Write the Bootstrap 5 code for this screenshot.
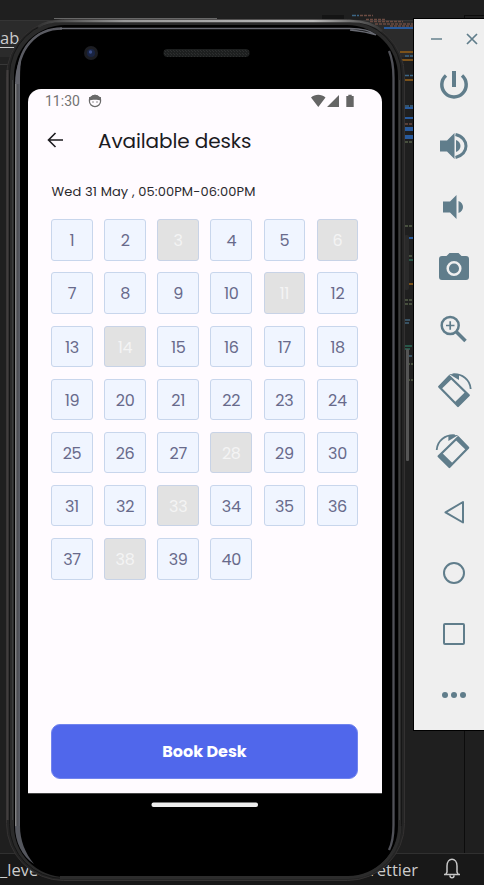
<!DOCTYPE html>
<html lang="en">
<head>
<meta charset="utf-8">
<meta name="viewport" content="width=device-width, initial-scale=1">
<title>Available desks</title>
<link href="https://cdn.jsdelivr.net/npm/bootstrap@5.3.0/dist/css/bootstrap.min.css" rel="stylesheet">
<style>
  body { background: #1f1f1f; }
  .desktop { width: 484px; height: 885px; font-family: Poppins, Inter, sans-serif; }
  .layer { position: absolute; left: 0; top: 0; }
  .editor { height: 885px; font-family: "Open Sans", "Noto Sans", sans-serif; color: #ccc; font-size: 16.5px; line-height: 20px; }
  .tab-strip { margin-top: 20px; height: 37px; background: #2b2b2b; border-top: 1px solid #353535; }
  .tab-strip span { border-bottom: 1px solid #ccc; height: 27px; padding-top: 7px; line-height: 20px; }
  .editor-status { height: 32px; background: #181818; border-top: 1px solid #303030; }
  .status-right { margin-right: 66px; }
  .phone-screen { position: absolute; left: 28px; top: 89px; width: 354px; height: 704px; background: #fffbff; border-radius: 13px 13px 0 0; }
  .status-bar { height: 24px; padding: 0 27px 0 17px; font: 14px/24px Roboto, sans-serif; color: #737373; }
  .face { margin-left: 7px; }
  .app-bar { height: 54px; padding-left: 19px; }
  .app-bar h1 { font-size: 20px; font-weight: 400; color: #1c1b1f; margin: 1px 0 0 34px; letter-spacing: -.1px; line-height: 30px; }
  .slot-time { font-size: 13px; line-height: 20px; margin: 14.6px 23px 17.8px 23.5px; color: #2a292d; white-space: nowrap; letter-spacing: .12px; }
  .desk-grid { display: grid; grid-template-columns: repeat(6, 41.6px); grid-auto-rows: 41.6px; gap: 11.5px; margin: 0 23.2px; }
  .desk { border: 1px solid #c8d6ec; border-radius: 3px; background: #f0f5ff; color: #686a8b; font-size: 16px; padding: 1px 0 0; line-height: 39px; letter-spacing: -.3px; }
  .desk.taken { background: #e2e2e2; color: #f4f4f4; opacity: 1; border-color: #c8d3e6; }
  .book { background: #5067eb; color: #fff; height: 55px; margin: 0 24px 14px 23px; border: 1px solid #7184ee; border-radius: 9px; font-weight: 700; font-size: 16px; padding: 1px 0 0; }
  .tools { position: absolute; left: 413px; top: 18px; width: 71px; height: 713px; background: #efefef; border: 1px solid #000; border-right: 0; color: #607d8b; }
  .window-buttons { height: 35px; padding: 14px 6px 0 16px; }
  .tool { height: 61px; padding-left: 20px; }
</style>
<script src="https://cdn.jsdelivr.net/npm/bootstrap@5.3.0/dist/js/bootstrap.bundle.min.js"></script>
</head>
<body>
<div class="desktop position-relative overflow-hidden">
  <div class="editor d-flex flex-column">
    <div class="tab-strip d-flex"><span>ab</span></div>
    <div class="editor-status mt-auto d-flex align-items-center justify-content-between">
      <div>_leve</div>
      <div class="status-right">Prettier</div>
    </div>
  </div>

  <!-- Editor minimap, status bell and the device frame -->
  <svg class="layer" width="484" height="885" aria-hidden="true">
    <defs>
      <linearGradient id="topEdge" x1="0" x2="1"><stop offset="0" stop-color="#333"/><stop offset=".25" stop-color="#999"/><stop offset=".8" stop-color="#bbb"/><stop offset="1" stop-color="#333"/></linearGradient>
      <linearGradient id="leftGlint" x1="0" x2="1"><stop offset="0" stop-color="#909090"/><stop offset=".45" stop-color="#4c4d52"/><stop offset="1" stop-color="#5c5f68"/></linearGradient>
      <pattern id="mesh" width="3" height="3" patternUnits="userSpaceOnUse"><rect width="3" height="3" fill="#1d1f1f"/><path d="M0 0h1v1H0zM2 2h1v1H2z" fill="#2d2f2f"/></pattern>
    </defs>
    <rect y="57" width="404" height="7" fill="#222"/><rect y="64" width="404" height="1" fill="#383838"/>
    <rect x="322" y="15" width="22" height="5" fill="#141414"/>
    <path d="M464.500 15.500H484M464.500 15V19M464.500 730V853" stroke="#0c0c0c" fill="none"/>
    <g fill="none" stroke-width="1.500">
      <path d="M352 15.500h7M405 56h9M405 75.500h9M405 106h9" stroke="#3c6685" stroke-dasharray="4 1"/>
      <path d="M360 15.500h13M366 19.500h20M370 21.500h33M375 24h38M390 26h23M405 124h9" stroke="#6b4b42" stroke-dasharray="3 1"/>
      <path d="M384 28h30M402 108h12M402 118h12M402 238h12" stroke="#285a9c" stroke-width="2"/>
      <path d="M402 129h12M402 137h12" stroke="#285a9c" stroke-width="4"/>
      <path d="M400 52h14M400 60h14M400 80h14M405 284h9" stroke="#7b521a" stroke-width="2"/>
      <path d="M405 142h9M405 226h9M405 256h9M405 300h8M405 304h8M407 364h6M407 380h6" stroke="#55604a" stroke-dasharray="3 1"/>
      <path d="M405 260h9M405 346h7M405 349h5" stroke="#2b6a57"/>
      <path d="M405 320h5M405 323h4M408 356h4" stroke="#42637a"/>
    </g>
    <path d="M444 874.500h16M446 874l1-2v-6c0-9 10-9 10 0v6l1 2M450 875.500c0 3 4 3 4 0" fill="none" stroke="#c8c8c8" stroke-width="1.500"/>

    <rect x="404" y="235" width="5" height="55" rx="2" fill="#2a2a2a"/>
    <rect x="406" y="349" width="3" height="112" rx="1" fill="#555"/>
    <rect x="6.500" y="19.500" width="398" height="861" rx="57" fill="#242424" stroke="#333131"/>
    <path d="M7.500 70V820" stroke="#423e3e" stroke-width="2"/>
    <rect x="9.500" y="21" width="392" height="857.500" rx="54" fill="#2a2a2a" stroke="#161616"/>
    <path d="M12.500 80V820M399.500 80V820" stroke="#3c3d3d"/>
    <path d="M54 18.500H217" stroke="#686868"/>
    <path d="M38 27C45 22 52 21 62 21H350C364 21 374 24 382 31" fill="none" stroke="url(#topEdge)" stroke-width="2.500"/>
    <rect x="14" y="25" width="384" height="852" rx="51" fill="#000"/>
    <path d="M17.500 83V80C17.500 49 35 28.500 62 28.500" fill="none" stroke="#5a5b62" stroke-width="2.500"/>
    <rect x="15" y="82" width="5" height="745" fill="url(#leftGlint)"/>
    <path d="M15 84c0-9 1.500-17 4.500-24l1.500 1c-1 7-1 14-1 23z" fill="#606169"/>
    <path d="M15 826h5c0 14 5 27 14 38c-12-8-19-22-19-38z" fill="#54565d"/>
    <path d="M60 28.500H350C362 28.500 370 30 376 35C368 32 360 31 350 30" fill="none" stroke="#686a72" stroke-width="1.300"/>
    <path d="M389 51C392 58 393.500 66 393.500 78V825C393.500 837 392 844 389 850" fill="none" stroke="#505158" stroke-width="2.300"/>
    <path d="M60 877.500H348C377 877 400 854 400 826" fill="none" stroke="#2c2c2c" stroke-width="3"/>
    <circle cx="91" cy="53" r="7" fill="#1c1d22"/><circle cx="91" cy="53" r="4" fill="#192443"/><circle cx="90.500" cy="52" r="1.700" fill="#3a4d89"/>
    <rect x="163.500" y="49" width="86" height="8" rx="4" fill="url(#mesh)"/>
    <rect x="28" y="793" width="354" height="1" fill="#444"/>
    <rect x="151.500" y="802.500" width="106.500" height="4.500" rx="2" fill="#eee"/>
  </svg>

  <main class="phone-screen d-flex flex-column">
    <div class="status-bar d-flex align-items-center">
      <span>11:30</span>
      <svg class="face" width="16" height="16" viewBox="0 0 16 16" aria-hidden="true"><circle cx="8" cy="8" r="5.600" fill="none" stroke="#6a6a6a" stroke-width="1.200"/><path d="M2 7.500V4l2 .2C6 1 10 1 12 4.200L14 4v3.500C11 6.500 5 6.500 2 7.500z" fill="#6a6a6a"/><circle cx="6" cy="9" r=".7" fill="#6a6a6a"/><circle cx="10" cy="9" r=".7" fill="#6a6a6a"/></svg>
      <svg class="ms-auto" width="44" height="14" viewBox="0 0 44 14" fill="#656565" aria-hidden="true"><path d="M0 3.500C4-.1 10.500-.1 14.500 3.500L7.300 13zM28 1v12H16zM35.300 2h2V.7h3.400V2h2v11h-7.400z"/></svg>
    </div>
    <header class="app-bar d-flex align-items-center">
      <svg width="17" height="16" viewBox="0 0 17 16" fill="none" stroke="#1c1b1f" stroke-width="1.600" aria-hidden="true"><path d="M16 8H2M8.500 1L1.500 8l7 7"/></svg>
      <h1>Available desks</h1>
    </header>
    <p class="slot-time">Wed 31 May , 05:00PM-06:00PM</p>
    <div class="desk-grid" id="desks"></div>
    <button class="btn book mt-auto">Book Desk</button>
  </main>

  <aside class="tools">
    <div class="window-buttons d-flex justify-content-between">
      <svg width="12" height="12" aria-hidden="true"><path d="M1 6h11" stroke="currentColor" stroke-width="1.800" opacity=".8"/></svg>
      <svg width="12" height="12" aria-hidden="true"><path d="M1 1l10 10M11 1L1 11" stroke="currentColor" stroke-width="1.700"/></svg>
    </div>
    <div class="tool d-flex align-items-center"><svg width="40" height="40" fill="none" stroke="currentColor" stroke-width="3.500"><path d="M20 6v16" stroke-width="4"/><path d="M12 10.500A12.200 12.200 0 1 0 28 10.500"/></svg></div>
    <div class="tool d-flex align-items-center"><svg width="40" height="40" fill="currentColor"><path d="M6 14.500h7l7.500-7.500v26l-7.500-7.500H6zM22 14c6 2 6 10 0 12z"/><path d="M21.500 8.500c14 3 14 20 0 23" fill="none" stroke="currentColor" stroke-width="3"/></svg></div>
    <div class="tool d-flex align-items-center"><svg width="40" height="40" fill="currentColor"><path d="M9 14.500h7l6.500-6.500v24l-6.500-6.500H9zM24.500 14c6 2 6 10 0 12z"/></svg></div>
    <div class="tool d-flex align-items-center"><svg width="40" height="40" fill="currentColor"><path d="M15.500 6h9l3 3H32a3 3 0 0 1 3 3v18a3 3 0 0 1-3 3H8a3 3 0 0 1-3-3V12a3 3 0 0 1 3-3h4.500z" transform="translate(0 -1)"/><circle cx="20" cy="20.500" r="6.300" fill="none" stroke="#efefef" stroke-width="2.500"/></svg></div>
    <div class="tool d-flex align-items-center"><svg width="40" height="40" fill="none" stroke="currentColor"><circle cx="16.200" cy="16.500" r="8.500" stroke-width="2.500"/><path d="M12 16.500h8.500M16.200 12.300v8.500" stroke-width="1.700"/><path d="M22 22.500l9.500 9.500" stroke-width="3.500"/></svg></div>
    <div class="tool d-flex align-items-center"><svg width="40" height="40" fill="none" stroke="currentColor"><path d="M15.300 6.200L34.800 25.300L24 36L5.200 16.800z" stroke-width="2.200" stroke-linejoin="round"/><path d="M15.300 5.500l3 3L7.500 19l-3-2.500zM34.500 25.500L24 36l-3.500-3.500L31.200 22z" fill="currentColor" stroke="none"/><path d="M18.500 4.300C28 3.500 36 9.500 36.700 19" stroke-width="1.800"/><path d="M15 4l10 .5V10z" fill="currentColor" stroke="none"/></svg></div>
    <div class="tool d-flex align-items-center"><svg width="40" height="40" fill="none" stroke="currentColor"><g transform="matrix(-1 0 0 1 39.400 0)"><path d="M15.300 6.200L34.800 25.300L24 36L5.200 16.800z" stroke-width="2.200" stroke-linejoin="round"/><path d="M15.300 5.500l3 3L7.500 19l-3-2.500zM34.500 25.500L24 36l-3.500-3.500L31.200 22z" fill="currentColor" stroke="none"/><path d="M18.500 4.300C28 3.500 36 9.500 36.700 19" stroke-width="1.800"/><path d="M15 4l10 .5V10z" fill="currentColor" stroke="none"/></g></svg></div>
    <div class="tool d-flex align-items-center"><svg width="40" height="40" fill="none" stroke="currentColor" stroke-width="2" stroke-linejoin="round"><path d="M11.500 20.300L29 10v20.500z"/></svg></div>
    <div class="tool d-flex align-items-center"><svg width="40" height="40" fill="none" stroke="currentColor" stroke-width="2"><circle cx="20" cy="20" r="10"/></svg></div>
    <div class="tool d-flex align-items-center"><svg width="40" height="40" fill="none" stroke="currentColor" stroke-width="2"><rect x="10" y="10" width="20" height="20" rx="1"/></svg></div>
    <div class="tool d-flex align-items-center"><svg width="40" height="40" fill="currentColor"><circle cx="11" cy="20" r="3"/><circle cx="20" cy="20" r="3"/><circle cx="29" cy="20" r="3"/></svg></div>
  </aside>
</div>
<script>
  const taken = [3, 6, 11, 14, 28, 33, 38];
  const grid = document.getElementById('desks');
  for (let n = 1; n <= 40; n++) {
    const b = document.createElement('button');
    b.className = 'btn desk' + (taken.includes(n) ? ' taken' : '');
    b.disabled = taken.includes(n);
    b.textContent = n;
    grid.appendChild(b);
  }
</script>
</body>
</html>
